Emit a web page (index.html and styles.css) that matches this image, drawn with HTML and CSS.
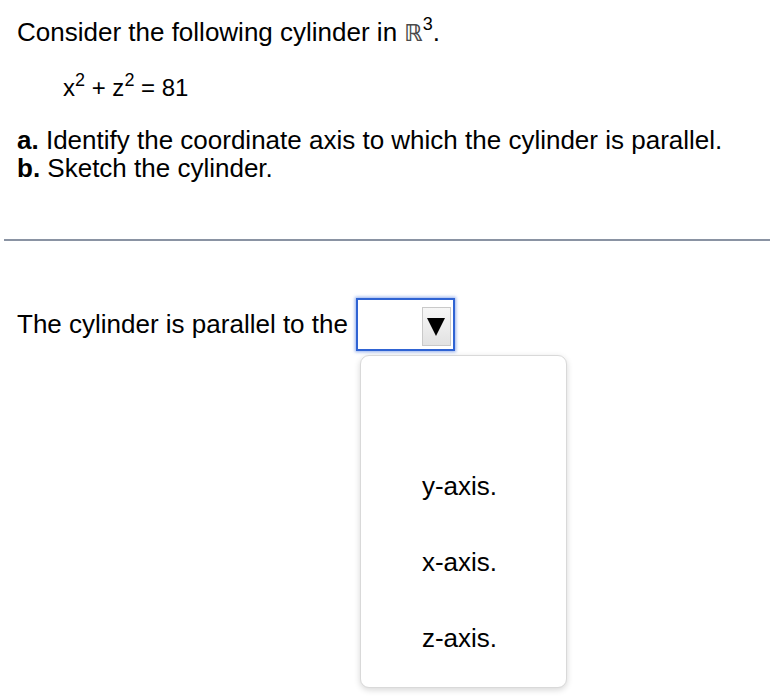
FILE: index.html
```html
<!DOCTYPE html>
<html>
<head>
<meta charset="utf-8">
<link rel="stylesheet" href="styles.css">
</head>
<body>
<div class="page">
  <p class="intro">Consider the following cylinder in <span class="reals">ℝ</span><sup class="sup3">3</sup>.</p>
  <p class="eq">x<sup class="sq">2</sup> + z<sup class="sq">2</sup> = 81</p>
  <p class="part part-a"><b>a.</b> Identify the coordinate axis to which the cylinder is parallel.</p>
  <p class="part"><b>b.</b> Sketch the cylinder.</p>
</div>
<hr class="divider">
<div class="answer">
  <span class="prompt">The cylinder is parallel to the</span>
  <div class="select-wrap">
    <div class="select">
      <div class="select-btn"><span class="tri"></span></div>
    </div>
    <div class="popup">
      <div class="option">y-axis.</div>
      <div class="option">x-axis.</div>
      <div class="option">z-axis.</div>
    </div>
  </div>
</div>
</body>
</html>
```
FILE: styles.css
```css
html, body {
  margin: 0;
  padding: 0;
  background: #fff;
}
body {
  font-family: "Liberation Sans", Arial, sans-serif;
  color: #000;
  width: 770px;
  height: 698px;
  overflow: hidden;
  position: relative;
}
.page {
  padding: 17px 0 0 17px;
}
.page p {
  margin: 0;
}
.intro {
  font-size: 26px;
  line-height: 30px;
}
.reals {
  font-family: "DejaVu Sans", sans-serif;
  color: #4a4a4a;
  font-size: 23px;
  font-weight: bold;
}
.sup3 {
  font-size: 18px;
  line-height: 0;
  vertical-align: 11px;
}
.eq {
  font-size: 24px;
  line-height: 30px;
  margin-top: 25px !important;
  padding-left: 46px;
}
.sq {
  font-size: 18px;
  line-height: 0;
  vertical-align: 10px;
}
.part {
  font-size: 26px;
  line-height: 28px;
}
.part-a {
  margin-top: 23px !important;
}
.divider {
  margin: 57px 0 0 4px;
  border: 0;
  height: 2px;
  background: #8a93a3;
}
.answer {
  display: flex;
  align-items: center;
  padding-left: 17px;
  margin-top: 57px;
}
.prompt {
  font-size: 26px;
  line-height: 30px;
  position: relative;
  top: -1px;
}
.select-wrap {
  position: relative;
  margin-left: 8px;
}
.select {
  width: 93px;
  height: 46px;
  border: 2px solid #2f63d3;
  box-shadow: 0 0 3px 1px rgba(60, 110, 220, 0.55);
  background: #fff;
  display: flex;
  justify-content: flex-end;
  align-items: flex-end;
  padding: 0 2px 3px 0;
  box-sizing: content-box;
}
.select-btn {
  width: 27px;
  height: 37px;
  border: 1px solid #c9c9c9;
  background: linear-gradient(#f7f7f7, #e2e2e2);
  display: flex;
  align-items: center;
  justify-content: center;
}
.tri {
  width: 0;
  height: 0;
  border-left: 9.5px solid transparent;
  border-right: 9.5px solid transparent;
  border-top: 18px solid #000;
}
.popup {
  position: absolute;
  left: 4px;
  top: 57px;
  width: 207px;
  height: 333px;
  background: #fff;
  border: 1px solid #d9d9d9;
  border-radius: 9px;
  box-shadow: 0 2px 6px rgba(0, 0, 0, 0.16);
  padding: 92px 0 0 0;
  box-sizing: border-box;
  display: flex;
  flex-direction: column;
}
.option {
  height: 76px;
  display: flex;
  align-items: center;
  padding-left: 61px;
  font-size: 26px;
  line-height: 30px;
}
```
